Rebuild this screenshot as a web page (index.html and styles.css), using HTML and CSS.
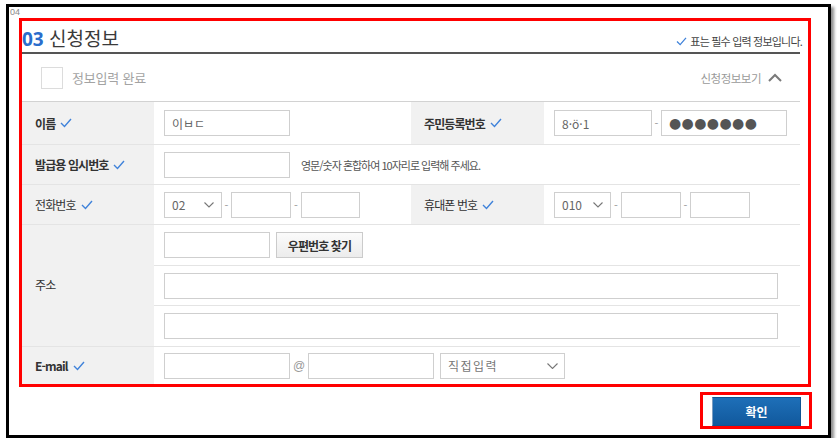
FILE: index.html
```html
<!DOCTYPE html>
<html lang="ko">
<head>
<meta charset="utf-8">
<title>신청정보</title>
<link rel="stylesheet" href="styles.css">
</head>
<body>
<div class="frame">
  <span class="tag">04</span>
  <div class="redbox main">
    <div class="content">
      <div class="title-row">
        <h2 class="title"><span class="num">03</span> 신청정보</h2>
        <p class="note"><svg class="chk" width="11" height="9" viewBox="0 0 12 10"><polyline points="1,5 4.5,8.5 11,1" /></svg> 표는 필수 입력 정보입니다.</p>
      </div>
      <div class="status-row">
        <div class="done"><span class="checkbox"></span>정보입력 완료</div>
        <div class="toggle">신청정보보기 <svg class="up" width="14" height="9" viewBox="0 0 14 9"><polyline points="1,8 7,2 13,8" /></svg></div>
      </div>
      <div class="form-grid">
        <div class="th bold">이름<svg class="chk" width="12" height="10" viewBox="0 0 12 10"><polyline points="1,5 4.5,8.5 11,1" /></svg></div>
        <div class="td"><input class="inp w126" type="text" value="이ㅂㄷ"></div>
        <div class="th bold">주민등록번호<svg class="chk" width="12" height="10" viewBox="0 0 12 10"><polyline points="1,5 4.5,8.5 11,1" /></svg></div>
        <div class="td"><input class="inp w98" type="text" value="8·ö·1"><span class="dash">-</span><input class="inp w126 dots" type="text" value="●●●●●●●"></div>

        <div class="th bold">발급용 임시번호<svg class="chk" width="12" height="10" viewBox="0 0 12 10"><polyline points="1,5 4.5,8.5 11,1" /></svg></div>
        <div class="td span3"><input class="inp w126" type="text"><span class="hint">영문/숫자 혼합하여 10자리로 입력해 주세요.</span></div>

        <div class="th">전화번호<svg class="chk" width="12" height="10" viewBox="0 0 12 10"><polyline points="1,5 4.5,8.5 11,1" /></svg></div>
        <div class="td"><div class="select w58">02<svg class="down" width="10" height="6" viewBox="0 0 10 6"><polyline points="0.5,0.5 5,5 9.5,0.5" /></svg></div><span class="dash">-</span><input class="inp w60" type="text"><span class="dash d10">-</span><input class="inp w59" type="text"></div>
        <div class="th">휴대폰 번호<svg class="chk" width="12" height="10" viewBox="0 0 12 10"><polyline points="1,5 4.5,8.5 11,1" /></svg></div>
        <div class="td"><div class="select w57">010<svg class="down" width="10" height="6" viewBox="0 0 10 6"><polyline points="0.5,0.5 5,5 9.5,0.5" /></svg></div><span class="dash d10">-</span><input class="inp w60" type="text"><span class="dash">-</span><input class="inp w60" type="text"></div>

        <div class="th addr">주소</div>
        <div class="td span3"><input class="inp w106" type="text"><button class="find" type="button">우편번호 찾기</button></div>
        <div class="td span3"><input class="inp wfull" type="text"></div>
        <div class="td span3"><input class="inp wfull" type="text"></div>

        <div class="th bold last">E-mail<svg class="chk" width="12" height="10" viewBox="0 0 12 10"><polyline points="1,5 4.5,8.5 11,1" /></svg></div>
        <div class="td span3 last"><input class="inp w126" type="text"><span class="at">@</span><input class="inp w126" type="text"><div class="select w125 wide">직접입력<svg class="down" width="11" height="6" viewBox="0 0 11 6"><polyline points="0.5,0.5 5.5,5.5 10.5,0.5" /></svg></div></div>
      </div>
    </div>
  </div>
  <div class="actions">
    <div class="redbox btnbox"><button class="confirm" type="button">확인</button></div>
  </div>
</div>
</body>
</html>
```

FILE: styles.css
```css
* { box-sizing: border-box; }
html, body { margin: 0; padding: 0; background: #fff; }
body {
  font-family: "Noto Sans CJK KR", "Noto Sans", sans-serif;
  color: #333;
}
.frame {
  position: relative;
  margin: 4px 0 0 6px;
  width: 825px;
  height: 434px;
  border: 3px solid #000;
  background: #fff;
  box-shadow: 3px 3px 3px rgba(0,0,0,0.45);
}
.tag {
  position: absolute;
  left: 1px;
  top: 0px;
  font-size: 9px;
  line-height: 11px;
  color: #888;
  font-family: "Liberation Sans", sans-serif;
}
.redbox { border: 3px solid #ff0000; }
.main {
  position: relative;
  margin: 11px 0 0 10px;
  width: 792px;
  height: 369px;
  overflow: hidden;
}
.content { width: 778px; }

.title-row {
  height: 33px;
  display: flex;
  justify-content: space-between;
  border-bottom: 2px solid #555;
}
.title {
  margin: 0;
  align-self: center;
  font-size: 19px;
  line-height: 24px;
  font-weight: 400;
  color: #3a3a3a;
  letter-spacing: 0;
  padding-top: 3px;
}
.title .num { color: #2b6dcc; font-weight: 700; font-family: "Noto Sans", sans-serif; font-size: 19px; }
.note {
  margin: 0;
  align-self: flex-end;
  padding-bottom: 4px;
  margin-right: -2px;
  font-size: 11px;
  line-height: 14px;
  letter-spacing: -0.8px;
  color: #444;
  display: flex;
  align-items: center;
}
.note .chk { margin: 0 3px 0 0; }
.chk { fill: none; stroke: #3f82da; stroke-width: 1.4; margin-left: 5px; flex: none; }

.status-row {
  height: 48px;
  border-bottom: 1px solid #d2d2d2;
  display: flex;
  align-items: center;
  justify-content: space-between;
  padding: 0 18px 0 19px;
}
.done {
  display: flex;
  align-items: center;
  font-size: 13px;
  color: #a3a3a3;
  letter-spacing: -0.2px;
}
.checkbox {
  width: 22px;
  height: 22px;
  border: 1px solid #dcdcdc;
  margin-right: 9px;
  background: #fff;
}
.toggle {
  display: flex;
  align-items: center;
  font-size: 11.5px;
  color: #9a9a9a;
  letter-spacing: -0.5px;
}
.up { fill: none; stroke: #7a7a7a; stroke-width: 2; margin-left: 7px; }

.form-grid {
  display: grid;
  grid-template-columns: 132px 257px 133px 1fr;
  grid-template-rows: 43px 40px 40px 41px 40px 41px 37px;
}
.th, .td { border-bottom: 1px solid #e4e4e4; display: flex; align-items: center; }
.th {
  background: #f1f1f1;
  padding-left: 13px;
  font-size: 12px;
  letter-spacing: -0.9px;
  color: #333;
}
.th.bold { font-weight: 700; }
.th.addr { grid-row: span 3; padding-bottom: 2px; }
.last { border-bottom: none; }
.td { padding-left: 10px; }
.span3 { grid-column: span 3; }

.inp {
  height: 26px;
  border: 1px solid #cfcfcf;
  background: #fff;
  padding: 0 7px;
  font-family: "Noto Sans CJK KR", "Noto Sans", sans-serif;
  font-size: 12px;
  color: #666;
  outline: none;
  margin: 0;
}
.w126 { width: 126px; }
.w98 { width: 98px; }
.w106 { width: 106px; }
.w60 { width: 60px; }
.w59 { width: 59px; }
.wfull { width: 614px; }
.dots { font-family: "DejaVu Sans", sans-serif; font-size: 14px; letter-spacing: 0.4px; color: #555; padding-left: 7px; }
.dash { width: 9px; text-align: center; font-size: 11px; color: #999; }
.dash.d10 { width: 10px; }
.hint { margin-left: 11px; font-size: 11px; letter-spacing: -1px; color: #555; }
.at { width: 18px; text-align: center; font-size: 12px; color: #999; font-family: "Liberation Sans", sans-serif; }

.select {
  height: 26px;
  border: 1px solid #cfcfcf;
  background: #fff;
  display: flex;
  align-items: center;
  justify-content: space-between;
  padding: 0 7px 0 7px;
  font-size: 12px;
  color: #666;
}
.select.w58 { width: 58px; }
.select.w57 { width: 57px; }
.select.w125 { width: 125px; margin-left: 6px; }
.select.wide { letter-spacing: 1.5px; color: #777; padding-right: 6px; }
.down { fill: none; stroke: #777; stroke-width: 1.1; }

.find {
  margin-left: 6px;
  width: 87px;
  height: 26px;
  border: 1px solid #cbcbcb;
  background: linear-gradient(#fbfbfb, #ececec);
  font-family: "Noto Sans CJK KR", "Noto Sans", sans-serif;
  font-size: 12px;
  font-weight: 700;
  letter-spacing: -0.9px;
  color: #333;
  padding: 0;
}

.actions {
  display: flex;
  justify-content: flex-end;
  margin: 5px 16px 0 0;
}
.btnbox {
  padding: 2px 8px 0 9px;
  display: flex;
}
.confirm {
  width: 89px;
  height: 29px;
  border: 1px solid #0f5493;
  border-left-color: #7a9cc0;
  background: linear-gradient(#1e6fb8, #11599d);
  color: #fff;
  font-family: "Noto Sans CJK KR", "Noto Sans", sans-serif;
  font-size: 12px;
  font-weight: 700;
  padding: 0;
}
```
